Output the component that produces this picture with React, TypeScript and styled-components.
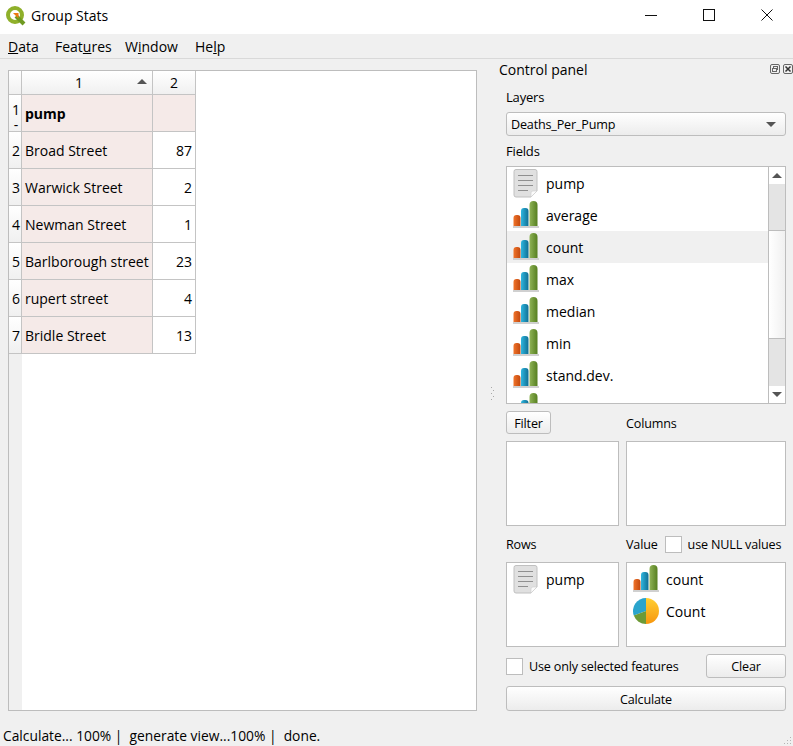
import { FunctionComponent, ReactNode } from 'react'
import styled, { createGlobalStyle } from 'styled-components'

const GlobalStyle = createGlobalStyle`
  html, body {
    margin: 0;
    padding: 0;
    background: #f0f0f0;
  }
  * {
    box-sizing: border-box;
  }
`

const Window = styled.div`
  width: 793px;
  height: 746px;
  display: flex;
  flex-direction: column;
  position: relative;
  overflow: hidden;
  background: #f0f0f0;
  color: #000;
  font-family: "Open Sans", "Noto Sans", sans-serif;
  font-size: 12.6px;
`

const TitleBar = styled.div`
  height: 34px;
  margin-right: -3px;
  flex: none;
  display: flex;
  align-items: center;
  background: #fff;
`

const Logo = styled.svg`
  width: 22px;
  height: 22px;
  margin-left: 5px;
  margin-bottom: 3px;
`

const TitleText = styled.div`
  margin-left: 4px;
  margin-bottom: 3px;
  font-size: 14px;
  flex: 1;
`

const WindowButton = styled.div`
  width: 58px;
  height: 34px;
  display: flex;
  align-items: center;
  justify-content: center;
  padding-bottom: 4px;
`

const MenuBar = styled.div`
  height: 25px;
  flex: none;
  display: grid;
  grid-template-columns: 47px 70px 70px auto;
  align-items: center;
  padding-left: 8px;
  font-size: 14px;
  border-bottom: 1px solid #d9d9d9;
`

const Content = styled.div`
  height: 666px;
  flex: none;
  display: flex;
`

const TableFrame = styled.div`
  width: 469px;
  height: 641px;
  margin: 11px 0 0 8px;
  border: 1px solid #bdbdbd;
  background: #fff;
  display: flex;
  flex-direction: column;
  flex: none;
  overflow: hidden;
`

const HeaderRow = styled.div`
  height: 24px;
  flex: none;
  display: flex;
`

const Corner = styled.div`
  width: 13px;
  background: linear-gradient(#fff, #f0f0f0);
  border-right: 1px solid #c4c4c4;
  border-bottom: 1px solid #c4c4c4;
`

const HeaderCell = styled.div<{ $width: number, $sorted?: boolean }>`
  width: ${p => p.$width}px;
  padding-right: ${p => (p.$sorted ? 16 : 0)}px;
  position: relative;
  display: flex;
  align-items: center;
  justify-content: center;
  font-size: 14px;
  background: linear-gradient(#fff, #f0f0f0);
  border-right: 1px solid #c4c4c4;
  border-bottom: 1px solid #c4c4c4;
`

const SortArrow = styled.div`
  position: absolute;
  right: 5px;
  top: 8px;
  width: 0;
  height: 0;
  border-left: 5px solid transparent;
  border-right: 5px solid transparent;
  border-bottom: 5px solid #555;
`

const TableBody = styled.div`
  flex: 1;
  display: flex;
`

const Gutter = styled.div`
  width: 13px;
  flex: none;
  background: #f0f0f0;
`

const RowHead = styled.div<{ $clipped?: boolean }>`
  height: 37px;
  padding-left: 2px;
  padding-top: ${p => (p.$clipped ? 8 : 0)}px;
  display: flex;
  flex-direction: column;
  align-items: center;
  justify-content: center;
  text-align: center;
  line-height: 15px;
  font-size: 14px;
  overflow: hidden;
  background: linear-gradient(#fff, #f0f0f0);
  border-right: 1px solid #c4c4c4;
  border-bottom: 1px solid #c4c4c4;
`

const Row = styled.div`
  height: 37px;
  display: flex;
`

const NameCell = styled.div<{ $bold?: boolean }>`
  width: 131px;
  padding-left: 3px;
  display: flex;
  align-items: center;
  white-space: nowrap;
  font-size: 14px;
  font-weight: ${p => (p.$bold ? 700 : 400)};
  background: #f5eae8;
  border-right: 1px solid #c4c4c4;
  border-bottom: 1px solid #c4c4c4;
`

const ValueCell = styled.div<{ $tinted?: boolean }>`
  width: 43px;
  padding-right: 3px;
  display: flex;
  align-items: center;
  justify-content: flex-end;
  font-size: 14px;
  background: ${p => (p.$tinted ? '#f5eae8' : '#fff')};
  border-right: 1px solid #c4c4c4;
  border-bottom: 1px solid #c4c4c4;
`

const Splitter = styled.div`
  width: 21px;
  flex: none;
  display: flex;
  align-items: center;
  justify-content: center;
  padding-top: 2px;
  padding-left: 10px;
`

const Panel = styled.div`
  flex: 1;
  padding: 0 7px 0 8px;
  display: flex;
  flex-direction: column;
  letter-spacing: -0.18px;
`

const PanelTitle = styled.div`
  height: 22px;
  padding-bottom: 2px;
  margin-left: -7px;
  margin-right: -7px;
  flex: none;
  display: flex;
  align-items: center;
  justify-content: space-between;
  font-size: 14px;
  letter-spacing: 0;
`

const DockIcons = styled.div`
  display: flex;
  gap: 3px;
`

const Label = styled.div<{ $top?: number }>`
  height: 18px;
  padding-bottom: 2px;
  flex: none;
  display: flex;
  align-items: center;
  margin-top: ${p => p.$top ?? 0}px;
  font-size: 13px;
`

const Combo = styled.div`
  height: 24px;
  margin-top: 5px;
  flex: none;
  display: flex;
  align-items: center;
  justify-content: space-between;
  padding: 0 9px 0 4px;
  border: 1px solid #bdbdbd;
  border-radius: 3px;
  background: linear-gradient(#fff, #ececec);
`

const DownArrow = styled.div`
  width: 0;
  height: 0;
  border-left: 5px solid transparent;
  border-right: 5px solid transparent;
  border-top: 5px solid #555;
`

const UpArrow = styled.div`
  width: 0;
  height: 0;
  border-left: 5px solid transparent;
  border-right: 5px solid transparent;
  border-bottom: 5px solid #555;
`

const ListBox = styled.div`
  height: 238px;
  margin-top: 5px;
  flex: none;
  display: flex;
  border: 1px solid #bdbdbd;
  background: #fff;
`

const FieldItems = styled.div`
  flex: 1;
  overflow: hidden;
`

const Item = styled.div<{ $hover?: boolean }>`
  height: 32px;
  padding-left: 6px;
  display: flex;
  align-items: center;
  gap: 7px;
  flex: none;
  font-size: 14px;
  letter-spacing: 0;
  background: ${p => (p.$hover ? '#f0f0f0' : 'transparent')};
`

const ScrollBar = styled.div`
  width: 17px;
  flex: none;
  display: flex;
  flex-direction: column;
  border-left: 1px solid #bdbdbd;
`

const ScrollButton = styled.div`
  height: 17px;
  flex: none;
  display: flex;
  align-items: center;
  justify-content: center;
  background: #fff;
`

const Track = styled.div<{ $height: number }>`
  height: ${p => p.$height}px;
  flex: none;
  background: #e4e4e4;
`

const Thumb = styled.div`
  flex: 1;
  background: linear-gradient(90deg, #fff, #f0f0f0);
  border-top: 1px solid #bdbdbd;
  border-bottom: 1px solid #bdbdbd;
`

const Button = styled.div`
  height: 100%;
  padding-top: 1px;
  display: flex;
  align-items: center;
  justify-content: center;
  border: 1px solid #bdbdbd;
  border-radius: 3px;
  background: linear-gradient(#fff, #ececec);
`

const FilterRow = styled.div`
  height: 23px;
  margin-top: 7px;
  flex: none;
  display: grid;
  grid-template-columns: 113px 160px;
  column-gap: 7px;
  align-items: center;
`

const FilterButton = styled(Button)`
  width: 45px;
`

const ColumnsLabel = styled.div`
  padding-top: 2px;
`

const BoxGrid = styled.div<{ $top: number }>`
  height: 85px;
  margin-top: ${p => p.$top}px;
  flex: none;
  display: grid;
  grid-template-columns: 113px 160px;
  column-gap: 7px;
`

const DropBox = styled.div`
  border: 1px solid #bdbdbd;
  background: #fff;
`

const LabelRow = styled.div`
  height: 18px;
  margin-top: 9px;
  flex: none;
  display: grid;
  grid-template-columns: 113px 160px;
  column-gap: 7px;
  align-items: center;
  white-space: nowrap;
`

const ValueLabels = styled.div`
  display: flex;
  align-items: center;
`

const CheckBox = styled.div`
  width: 17px;
  height: 17px;
  flex: none;
  background: #fff;
  border: 1px solid #bdbdbd;
`

const NullCheck = styled(CheckBox)`
  margin: 0 6px 0 7px;
`

const OptionsRow = styled.div`
  height: 24px;
  margin-top: 7px;
  flex: none;
  display: flex;
  align-items: center;
  gap: 6px;
`

const OptionText = styled.div`
  flex: 1;
`

const ClearButton = styled(Button)`
  width: 80px;
`

const CalculateButton = styled(Button)`
  height: 25px;
  margin-top: 8px;
  flex: none;
`

const StatusBar = styled.div`
  flex: 1;
  padding: 1px 0 0 3px;
  font-size: 13.8px;
  white-space: pre;
`

const Grip = styled.svg`
  position: absolute;
  right: 1px;
  bottom: 1px;
`

const BarsIcon: FunctionComponent = () =>
  <svg width="26" height="28" viewBox="0 0 26 28">
    <defs>
      <linearGradient id="bar-orange" x1="0" x2="1" y1="0" y2="0">
        <stop offset="0" stopColor="#f0742a" />
        <stop offset="1" stopColor="#c2480f" />
      </linearGradient>
      <linearGradient id="bar-blue" x1="0" x2="1" y1="0" y2="0">
        <stop offset="0" stopColor="#2fb6df" />
        <stop offset="1" stopColor="#0f6f94" />
      </linearGradient>
      <linearGradient id="bar-green" x1="0" x2="1" y1="0" y2="0">
        <stop offset="0" stopColor="#8fb356" />
        <stop offset="1" stopColor="#567f20" />
      </linearGradient>
    </defs>
    <path d="M.5 25v-8a3 3 0 0 1 3-3h1a3 3 0 0 1 3 3v8z" fill="url(#bar-orange)" />
    <path d="M8 25V10a3 3 0 0 1 3-3h1.500a3 3 0 0 1 3 3v15z" fill="url(#bar-blue)" />
    <path d="M16.500 25V4a4 4 0 0 1 8 0V25z" fill="url(#bar-green)" />
    <rect x="0" y="25" width="26" height="2" fill="#d0d0d0" />
  </svg>

const PageIcon: FunctionComponent = () =>
  <svg width="26" height="30" viewBox="0 0 26 30">
    <path d="M3 1.500h19a2 2 0 0 1 2 2V23l-6 6H3a2 2 0 0 1-2-2V3.500a2 2 0 0 1 2-2z" fill="#e0e0e0" stroke="#c0c0c0" />
    <path d="M5 7.500h15M5 12.500h15M5 17.500h15M5 22.500h10" stroke="#8f8f8f" strokeWidth="1" fill="none" />
    <path d="M24 23l-6 6v-4a2 2 0 0 1 2-2z" fill="#fbfbfb" stroke="#cfcfcf" strokeWidth="0.6" />
  </svg>

const PieIcon: FunctionComponent = () =>
  <svg width="26" height="26" viewBox="0 0 26 26">
    <defs>
      <linearGradient id="pie-orange" x1="0" x2="0" y1="0" y2="1">
        <stop offset="0" stopColor="#ffcf33" />
        <stop offset="1" stopColor="#f7960d" />
      </linearGradient>
    </defs>
    <path d="M13 13V0a13 13 0 0 1 0 26z" fill="url(#pie-orange)" />
    <path d="M13 13V0A13 13 0 0 0 .8 17.500z" fill="#2aa4cc" />
    <path d="M13 13L.8 17.500A13 13 0 0 0 13 26z" fill="#6d9a36" />
  </svg>

const Field: FunctionComponent<{ icon: ReactNode, name?: string, hover?: boolean }> = ({ icon, name, hover }) =>
  <Item $hover={hover}>
    {icon}
    {name}
  </Item>

const streets = [
  { name: 'Broad Street', value: '87' },
  { name: 'Warwick Street', value: '2' },
  { name: 'Newman Street', value: '1' },
  { name: 'Barlborough street', value: '23' },
  { name: 'rupert street', value: '4' },
  { name: 'Bridle Street', value: '13' },
]

const fields = ['average', 'count', 'max', 'median', 'min', 'stand.dev.']

const App: FunctionComponent = () =>
  <Window>
    <GlobalStyle />
    <TitleBar>
      <Logo viewBox="0 0 22 22">
        <circle cx="10" cy="10" r="7" fill="none" stroke="#8fb02a" strokeWidth="4" />
        <path d="M11 11l8 8" stroke="#6f9a22" strokeWidth="4" />
        <path d="M8 8h5.500v5.500z" fill="#ee7913" />
      </Logo>
      <TitleText>Group Stats</TitleText>
      <WindowButton>
        <svg width="12" height="12" viewBox="0 0 12 12"><path d="M0 6.500h12" stroke="#111" /></svg>
      </WindowButton>
      <WindowButton>
        <svg width="12" height="12" viewBox="0 0 12 12"><rect x=".5" y=".5" width="11" height="11" fill="none" stroke="#111" /></svg>
      </WindowButton>
      <WindowButton>
        <svg width="12" height="12" viewBox="0 0 12 12"><path d="M.5.5l11 11M11.500.5l-11 11" stroke="#111" /></svg>
      </WindowButton>
    </TitleBar>
    <MenuBar>
      <div><u>D</u>ata</div>
      <div>Feat<u>u</u>res</div>
      <div>W<u>i</u>ndow</div>
      <div>He<u>l</u>p</div>
    </MenuBar>
    <Content>
      <TableFrame>
        <HeaderRow>
          <Corner />
          <HeaderCell $width={131} $sorted>1<SortArrow /></HeaderCell>
          <HeaderCell $width={43}>2</HeaderCell>
        </HeaderRow>
        <TableBody>
          <Gutter>
            <RowHead $clipped><span>1</span><span>-</span></RowHead>
            {streets.map((s, i) => <RowHead key={s.name}>{i + 2}</RowHead>)}
          </Gutter>
          <div>
            <Row>
              <NameCell $bold>pump</NameCell>
              <ValueCell $tinted />
            </Row>
            {streets.map(s =>
              <Row key={s.name}>
                <NameCell>{s.name}</NameCell>
                <ValueCell>{s.value}</ValueCell>
              </Row>
            )}
          </div>
        </TableBody>
      </TableFrame>
      <Splitter>
        <svg width="3" height="14" viewBox="0 0 3 14">
          <path d="M0 1h1v1H0zM2 4h1v1H2zM0 7h1v1H0zM2 10h1v1H2zM0 13h1v1H0z" fill="#a8a8a8" />
        </svg>
      </Splitter>
      <Panel>
        <PanelTitle>
          <span>Control panel</span>
          <DockIcons>
            <svg width="10" height="10" viewBox="0 0 10 10">
              <rect x=".5" y=".5" width="9" height="9" rx="1.500" fill="none" stroke="#666" />
              <rect x="3.500" y="2.500" width="4" height="3" fill="none" stroke="#666" />
              <rect x="2.500" y="4.500" width="4" height="3" fill="#f0f0f0" stroke="#666" />
            </svg>
            <svg width="10" height="10" viewBox="0 0 10 10">
              <rect x=".5" y=".5" width="9" height="9" rx="1.500" fill="none" stroke="#666" />
              <path d="M2.500 2.500l5 5M7.500 2.500l-5 5" stroke="#333" strokeWidth="1.500" />
            </svg>
          </DockIcons>
        </PanelTitle>
        <Label $top={8}>Layers</Label>
        <Combo>
          Deaths_Per_Pump
          <DownArrow />
        </Combo>
        <Label $top={7}>Fields</Label>
        <ListBox>
          <FieldItems>
            <Field icon={<PageIcon />} name="pump" />
            {fields.map(f => <Field key={f} icon={<BarsIcon />} name={f} hover={f === 'count'} />)}
            <Field icon={<BarsIcon />} />
          </FieldItems>
          <ScrollBar>
            <ScrollButton><UpArrow /></ScrollButton>
            <Track $height={46} />
            <Thumb />
            <Track $height={47} />
            <ScrollButton><DownArrow /></ScrollButton>
          </ScrollBar>
        </ListBox>
        <FilterRow>
          <FilterButton>Filter</FilterButton>
          <ColumnsLabel>Columns</ColumnsLabel>
        </FilterRow>
        <BoxGrid $top={7}>
          <DropBox />
          <DropBox />
        </BoxGrid>
        <LabelRow>
          <div>Rows</div>
          <ValueLabels>
            Value
            <NullCheck />
            use NULL values
          </ValueLabels>
        </LabelRow>
        <BoxGrid $top={9}>
          <DropBox>
            <Field icon={<PageIcon />} name="pump" />
          </DropBox>
          <DropBox>
            <Field icon={<BarsIcon />} name="count" />
            <Field icon={<PieIcon />} name="Count" />
          </DropBox>
        </BoxGrid>
        <OptionsRow>
          <CheckBox />
          <OptionText>Use only selected features</OptionText>
          <ClearButton>Clear</ClearButton>
        </OptionsRow>
        <CalculateButton>Calculate</CalculateButton>
      </Panel>
    </Content>
    <StatusBar>Calculate... 100% |  generate view...100% |  done.</StatusBar>
    <Grip width="8" height="8" viewBox="0 0 8 8">
      <path d="M6 0h1v1H6zM3 3h1v1H3zM6 3h1v1H6zM0 6h1v1H0zM3 6h1v1H3zM6 6h1v1H6z" fill="#b4b4b4" />
    </Grip>
  </Window>

export default App
